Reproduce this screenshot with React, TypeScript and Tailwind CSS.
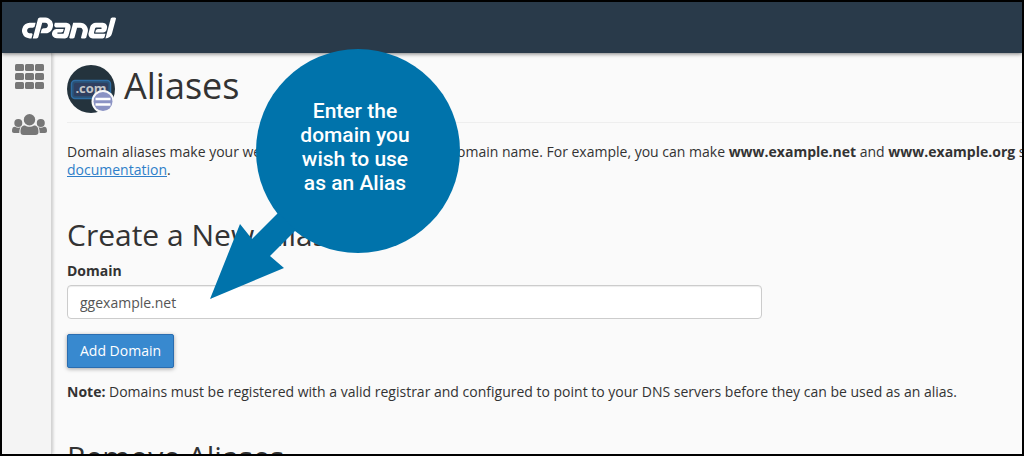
import React, { useState } from 'react';
import { SiCpanel } from 'react-icons/si';

const AppsIcon: React.FC = () => (
  <svg viewBox="0 0 29 25" className="w-[29px] h-[25px]" fill="currentColor" aria-hidden="true">
    {[0, 9, 18].map((y) =>
      [0, 10, 20].map((x) => <rect key={`${x}-${y}`} x={x} y={y} width="9" height="7" rx="1.5" />)
    )}
  </svg>
);

const UsersIcon: React.FC = () => (
  <svg viewBox="0 0 35 21" className="w-[35px] h-[21px]" fill="currentColor" aria-hidden="true">
    <circle cx="17.5" cy="5.7" r="5.7" />
    <circle cx="6.3" cy="9" r="4" />
    <circle cx="28.8" cy="9" r="4" />
    <path d="M8.5 18c0-4 1-6.5 4.5-6.5 1.2.8 2.7 1.3 4.5 1.3s3.3-.5 4.5-1.3c3.5 0 4.5 2.5 4.5 6.5 0 2-1 3-3 3h-12c-2 0-3-1-3-3z" />
    <path d="M0 17c0-2.8.8-4.3 3-4.3 1 .7 2 1 3.3 1 .9 0 1.5-.1 2.2-.4-.8 1.5-1.2 3.2-1.2 5.7H2c-1.3 0-2-.7-2-2z" />
    <path d="M35 17c0-2.8-.8-4.3-3-4.3-1 .7-2 1-3.3 1-.9 0-1.5-.1-2.2-.4.8 1.5 1.2 3.2 1.2 5.7H33c1.3 0 2-.7 2-2z" />
  </svg>
);

const AliasesIcon: React.FC = () => (
  <svg viewBox="0 0 48 48" className="size-12 shrink-0" aria-hidden="true">
    <circle cx="24" cy="24" r="24" fill="#24333d" />
    <rect x="4.5" y="15.5" width="39" height="18" rx="3.5" fill="#2a5074" stroke="#2f6ca3" strokeWidth="1.5" />
    <rect x="7" y="18" width="34" height="13" rx="1.5" fill="#2f3f60" />
    <text x="24" y="28" textAnchor="middle" fontSize="13" fontWeight="700" fill="#c4c6c8" className="font-['Open_Sans',sans-serif]">
      .com
    </text>
    <circle cx="36" cy="36.5" r="11.5" fill="#fafafa" />
    <circle cx="36" cy="36.5" r="9.5" fill="#8b93c4" />
    <path d="M28.5 34h15M28.5 39.5h15" stroke="#fff" strokeWidth="2.5" />
  </svg>
);

const Callout: React.FC = () => (
  <div className="absolute z-20 left-[208px] top-[47px] w-[250px] h-[252px] pointer-events-none">
    <svg viewBox="0 0 250 252" className="size-full" fill="#0073ab" aria-hidden="true">
      <circle cx="148" cy="102" r="102" />
      <path d="M0 250L30 175L42 190L68 164L86 181L60 207L74 219Z" />
    </svg>
    <p className="absolute left-[45px] top-[50px] w-[200px] text-center text-[21px] leading-6 font-medium text-white font-[Roboto,sans-serif]">
      Enter the
      <br />
      domain you
      <br />
      wish to use
      <br />
      as an Alias
    </p>
  </div>
);

const App: React.FC = () => {
  const [domain, setDomain] = useState('ggexample.net');

  return (
    <div className="relative flex flex-col h-screen overflow-hidden border-2 border-black bg-[#fafafa] text-[#333] text-sm leading-[18px] font-['Open_Sans',sans-serif]">
      <header className="relative z-10 flex items-center shrink-0 h-[51px] px-5 bg-[#293a4a] text-white shadow-[0_1px_4px_rgba(0,0,0,0.5)]">
        <a href="#home" aria-label="cPanel" className="flex items-center h-5">
          <SiCpanel className="size-[94px]" />
        </a>
      </header>

      <div className="flex flex-1 min-h-0">
        <nav className="flex flex-col items-center gap-[25px] w-[50px] shrink-0 pt-[11px] pl-[5px] bg-[#f4f4f4] text-[#777] border-r border-[#d4d4d4] shadow-[1px_0_3px_rgba(0,0,0,0.2)]">
          <a href="#apps" aria-label="Home">
            <AppsIcon />
          </a>
          <a href="#users" aria-label="User Manager">
            <UsersIcon />
          </a>
        </nav>

        <main className="flex-1 min-w-0 overflow-hidden pl-[15px] pt-3">
          <div className="flex gap-[9px] h-[58px] border-b border-[#eee]">
            <AliasesIcon />
            <h1 className="text-4xl leading-[42px] font-normal">Aliases</h1>
          </div>

          <p className="mt-5 whitespace-nowrap">
            Domain aliases make your website available from another domain name. For example, you can make{' '}
            <strong>www.example.net</strong> and <strong>www.example.org</strong> show
            <br />
            <a href="#documentation" className="text-[#2f7fc9] underline">
              documentation
            </a>
            .
          </p>

          <h2 className="mt-10 text-3xl leading-8 font-normal">Create a New Alias</h2>
          <form onSubmit={(event) => event.preventDefault()}>
            <label htmlFor="domain" className="block mt-[11px] font-bold">
              Domain
            </label>
            <input
              id="domain"
              type="text"
              value={domain}
              onChange={(event) => setDomain(event.target.value)}
              className="block mt-[5px] w-8/11 h-[34px] px-3 rounded border border-[#ccc] bg-white text-[#555] shadow-[inset_0_1px_1px_rgba(0,0,0,0.075)]"
            />
            <button
              type="submit"
              className="block mt-[15px] h-[34px] px-3 rounded-xs border border-[#2a6db0] bg-[#3889cf] text-white shadow-[0_1px_4px_rgba(0,0,0,0.35)]"
            >
              Add Domain
            </button>
          </form>
          <p className="mt-[15px]">
            <strong>Note:</strong> Domains must be registered with a valid registrar and configured to point to your DNS
            servers before they can be used as an alias.
          </p>

          <h2 className="mt-10 text-3xl leading-8 font-normal">Remove Aliases</h2>
        </main>
      </div>

      <Callout />
    </div>
  );
};

export default App;
